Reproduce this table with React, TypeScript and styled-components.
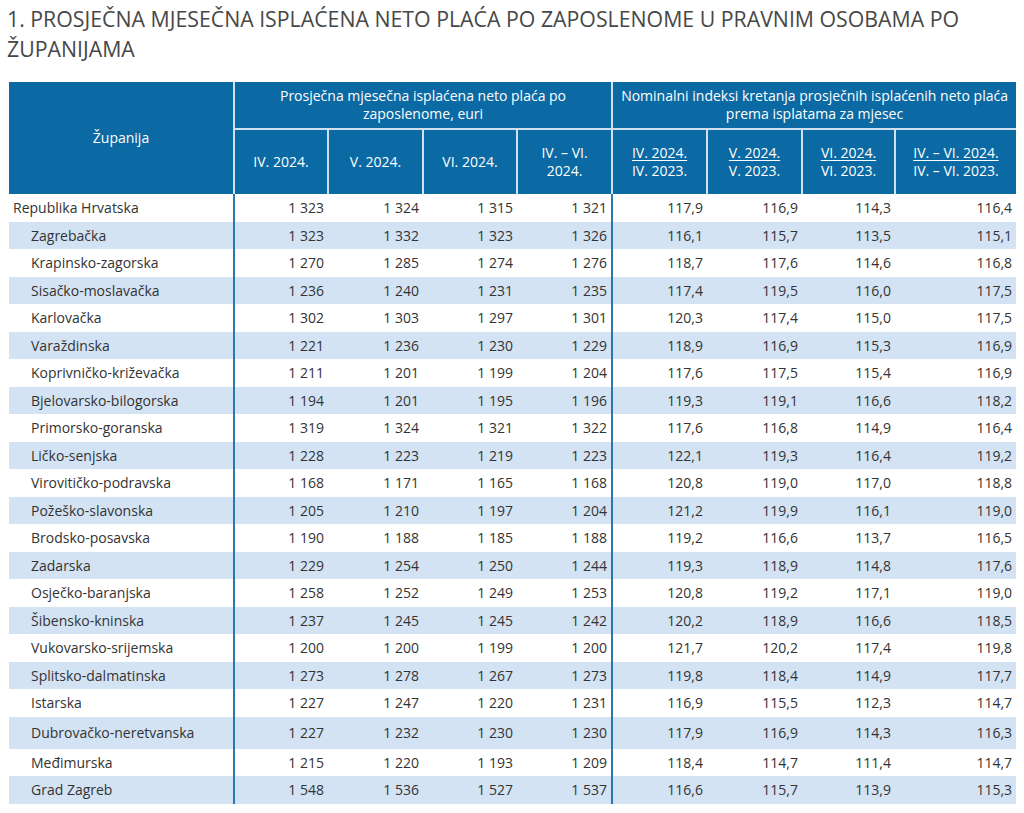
import React from "react";
import styled, { createGlobalStyle } from "styled-components";

const GlobalStyle = createGlobalStyle`
  html, body { margin: 0; padding: 0; background: #ffffff; }
  body { font-family: "Open Sans", "Noto Sans", sans-serif; color: #333; }
`;

const Page = styled.div`
  width: 1024px;
  padding: 4px 0 0 0;
`;

const Title = styled.h1`
  margin: 0 0 18px 7px;
  font-size: 21.3px;
  line-height: 30px;
  font-weight: 400;
  color: #474747;
  text-transform: uppercase;
`;

const Table = styled.table`
  margin-left: 9px;
  width: 1007px;
  table-layout: fixed;
  border-collapse: collapse;
  font-size: 14px;
`;

const HeadCell = styled.th<{ $last?: boolean; $bottom?: boolean; $h?: number }>`
  background: #0b69a3;
  color: #ffffff;
  font-weight: 400;
  font-size: 14px;
  line-height: 18px;
  text-align: center;
  vertical-align: middle;
  padding: 0 3px;
  height: ${(p) => (p.$h ? `${p.$h}px` : "auto")};
  border-right: ${(p) => (p.$last ? "none" : "2px solid #cfe1ee")};
  border-bottom: ${(p) => (p.$bottom ? "2px solid #cfe1ee" : "none")};
`;

const Under = styled.span`
  text-decoration: underline;
  text-underline-offset: 2px;
`;

const Row = styled.tr<{ $alt: boolean; $tall?: boolean }>`
  background: ${(p) => (p.$alt ? "#d3e3f4" : "#ffffff")};
  height: ${(p) => (p.$tall ? "32px" : "27.5px")};
`;

const NameCell = styled.td<{ $indent: boolean }>`
  padding: 0 0 0 ${(p) => (p.$indent ? "22px" : "4px")};
  color: #333;
  white-space: nowrap;
  border-right: 2px solid #2a78ae;
  vertical-align: middle;
`;

const NumCell = styled.td<{ $divider?: boolean }>`
  padding: 0 4px 0 0;
  text-align: right;
  color: #333;
  white-space: nowrap;
  vertical-align: middle;
  border-right: ${(p) => (p.$divider ? "2px solid #2a78ae" : "none")};
`;

type Rec = { name: string; v: string[]; i: string[] };

const data: Rec[] = [
  { name: "Republika Hrvatska", v: ["1 323", "1 324", "1 315", "1 321"], i: ["117,9", "116,9", "114,3", "116,4"] },
  { name: "Zagrebačka", v: ["1 323", "1 332", "1 323", "1 326"], i: ["116,1", "115,7", "113,5", "115,1"] },
  { name: "Krapinsko-zagorska", v: ["1 270", "1 285", "1 274", "1 276"], i: ["118,7", "117,6", "114,6", "116,8"] },
  { name: "Sisačko-moslavačka", v: ["1 236", "1 240", "1 231", "1 235"], i: ["117,4", "119,5", "116,0", "117,5"] },
  { name: "Karlovačka", v: ["1 302", "1 303", "1 297", "1 301"], i: ["120,3", "117,4", "115,0", "117,5"] },
  { name: "Varaždinska", v: ["1 221", "1 236", "1 230", "1 229"], i: ["118,9", "116,9", "115,3", "116,9"] },
  { name: "Koprivničko-križevačka", v: ["1 211", "1 201", "1 199", "1 204"], i: ["117,6", "117,5", "115,4", "116,9"] },
  { name: "Bjelovarsko-bilogorska", v: ["1 194", "1 201", "1 195", "1 196"], i: ["119,3", "119,1", "116,6", "118,2"] },
  { name: "Primorsko-goranska", v: ["1 319", "1 324", "1 321", "1 322"], i: ["117,6", "116,8", "114,9", "116,4"] },
  { name: "Ličko-senjska", v: ["1 228", "1 223", "1 219", "1 223"], i: ["122,1", "119,3", "116,4", "119,2"] },
  { name: "Virovitičko-podravska", v: ["1 168", "1 171", "1 165", "1 168"], i: ["120,8", "119,0", "117,0", "118,8"] },
  { name: "Požeško-slavonska", v: ["1 205", "1 210", "1 197", "1 204"], i: ["121,2", "119,9", "116,1", "119,0"] },
  { name: "Brodsko-posavska", v: ["1 190", "1 188", "1 185", "1 188"], i: ["119,2", "116,6", "113,7", "116,5"] },
  { name: "Zadarska", v: ["1 229", "1 254", "1 250", "1 244"], i: ["119,3", "118,9", "114,8", "117,6"] },
  { name: "Osječko-baranjska", v: ["1 258", "1 252", "1 249", "1 253"], i: ["120,8", "119,2", "117,1", "119,0"] },
  { name: "Šibensko-kninska", v: ["1 237", "1 245", "1 245", "1 242"], i: ["120,2", "118,9", "116,6", "118,5"] },
  { name: "Vukovarsko-srijemska", v: ["1 200", "1 200", "1 199", "1 200"], i: ["121,7", "120,2", "117,4", "119,8"] },
  { name: "Splitsko-dalmatinska", v: ["1 273", "1 278", "1 267", "1 273"], i: ["119,8", "118,4", "114,9", "117,7"] },
  { name: "Istarska", v: ["1 227", "1 247", "1 220", "1 231"], i: ["116,9", "115,5", "112,3", "114,7"] },
  { name: "Dubrovačko-neretvanska", v: ["1 227", "1 232", "1 230", "1 230"], i: ["117,9", "116,9", "114,3", "116,3"] },
  { name: "Međimurska", v: ["1 215", "1 220", "1 193", "1 209"], i: ["118,4", "114,7", "111,4", "114,7"] },
  { name: "Grad Zagreb", v: ["1 548", "1 536", "1 527", "1 537"], i: ["116,6", "115,7", "113,9", "115,3"] },
];

const colWidths = [225, 94, 95, 94, 95, 95, 95, 93, 121];

const indexHeads: [string, string][] = [
  ["IV. 2024.", "IV. 2023."],
  ["V. 2024.", "V. 2023."],
  ["VI. 2024.", "VI. 2023."],
  ["IV. – VI. 2024.", "IV. – VI. 2023."],
];

export default function App() {
  return (
    <Page>
      <GlobalStyle />
      <Title>
        1. Prosječna mjesečna isplaćena neto plaća po zaposlenome u pravnim osobama po županijama
      </Title>
      <Table>
        <colgroup>
          {colWidths.map((w, k) => (
            <col key={k} style={{ width: w }} />
          ))}
        </colgroup>
        <thead>
          <tr>
            <HeadCell rowSpan={2}>Županija</HeadCell>
            <HeadCell colSpan={4} $bottom $h={46}>
              Prosječna mjesečna isplaćena neto plaća po
              <br />
              zaposlenome, euri
            </HeadCell>
            <HeadCell colSpan={4} $bottom $last>
              Nominalni indeksi kretanja prosječnih isplaćenih neto plaća
              <br />
              prema isplatama za mjesec
            </HeadCell>
          </tr>
          <tr>
            <HeadCell $h={64}>IV. 2024.</HeadCell>
            <HeadCell>V. 2024.</HeadCell>
            <HeadCell>VI. 2024.</HeadCell>
            <HeadCell>
              IV. – VI.
              <br />
              2024.
            </HeadCell>
            {indexHeads.map(([a, b], k) => (
              <HeadCell key={k} $last={k === 3}>
                <Under>{a}</Under>
                <br />
                {b}
              </HeadCell>
            ))}
          </tr>
        </thead>
        <tbody>
          {data.map((r, k) => (
            <Row key={r.name} $alt={k % 2 === 1} $tall={r.name === "Dubrovačko-neretvanska"}>
              <NameCell $indent={k > 0}>{r.name}</NameCell>
              {r.v.map((x, j) => (
                <NumCell key={`v${j}`} $divider={j === 3}>
                  {x}
                </NumCell>
              ))}
              {r.i.map((x, j) => (
                <NumCell key={`i${j}`}>{x}</NumCell>
              ))}
            </Row>
          ))}
        </tbody>
      </Table>
    </Page>
  );
}
